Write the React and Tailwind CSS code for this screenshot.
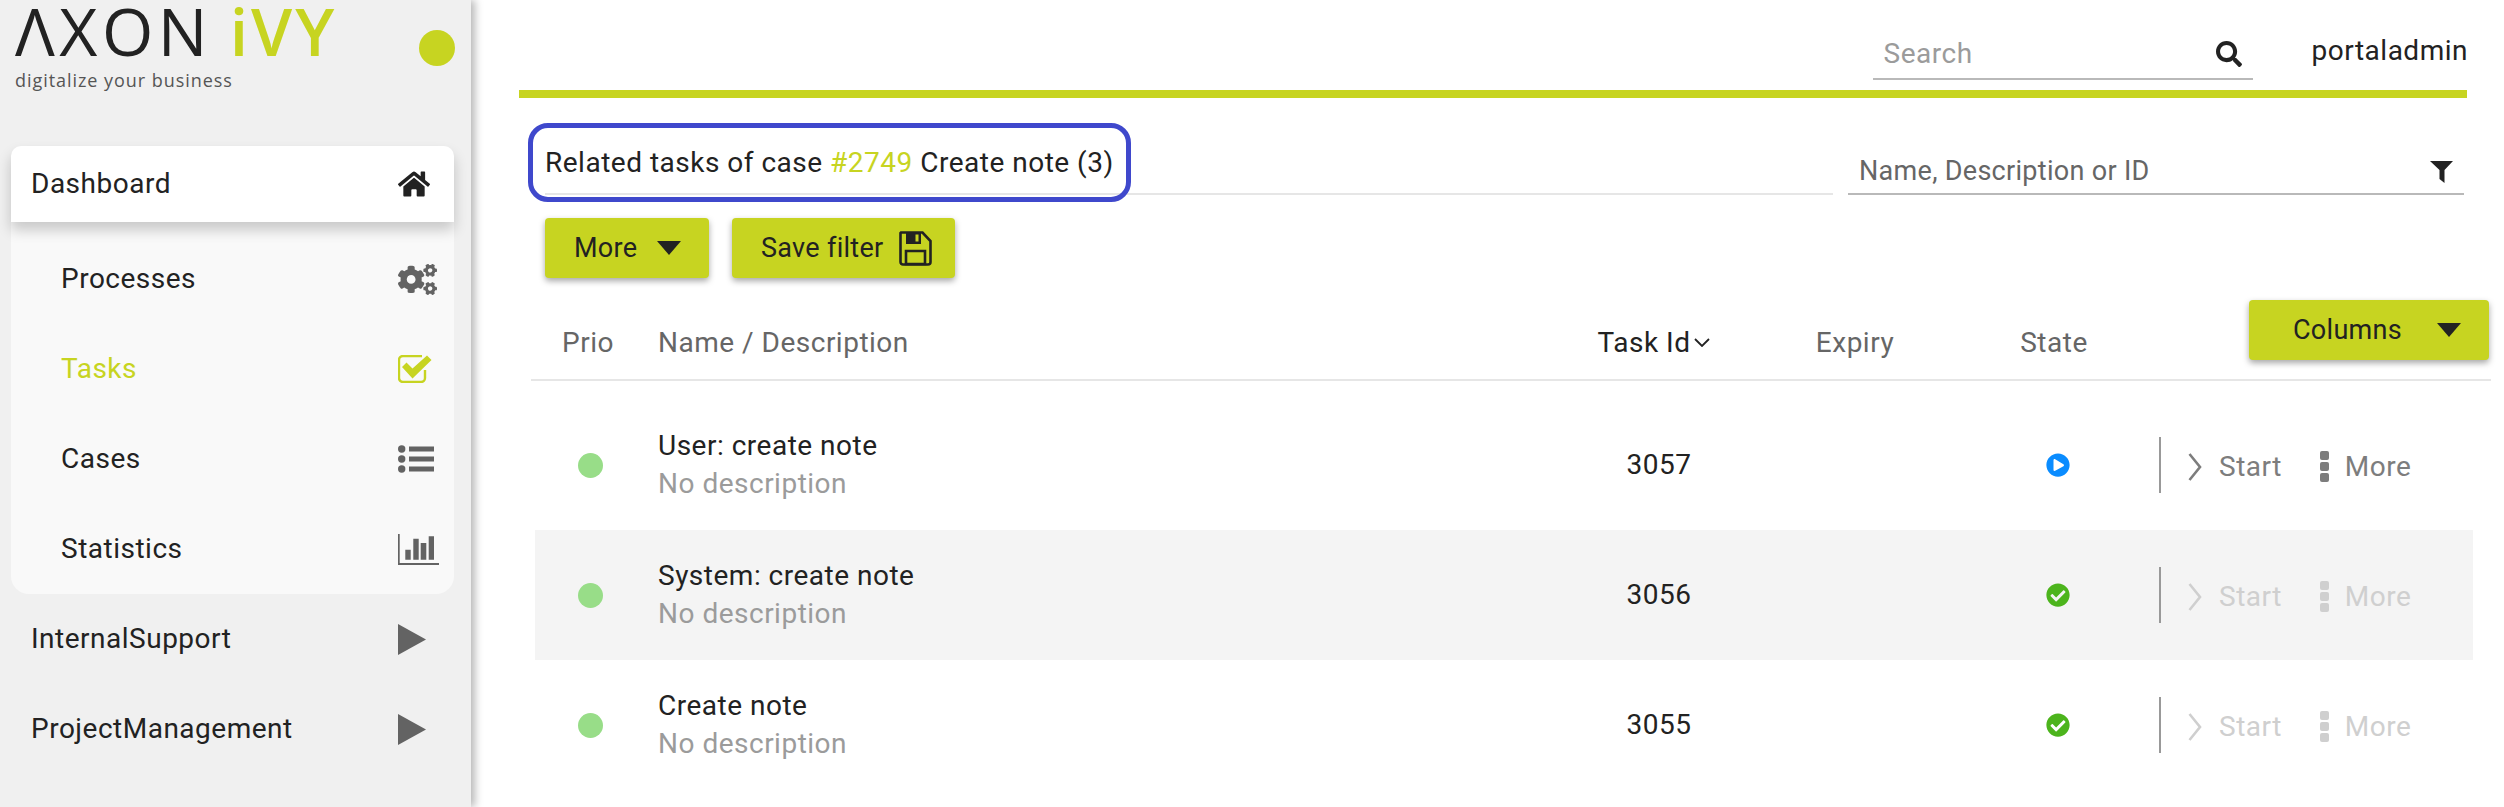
import { FaHome, FaCogs, FaSearch, FaCheckCircle, FaPlayCircle } from 'react-icons/fa';

function Triangle({ className }) {
  return (
    <svg viewBox="0 0 24 14" className={className} fill="currentColor">
      <path d="M0 0h24L12 14z" />
    </svg>
  );
}

function TasksIcon() {
  return (
    <svg viewBox="0 0 34 28" className="w-[34px] h-[28px]">
      <path d="M27 15v8a4 4 0 0 1-4 4H5a4 4 0 0 1-4-4V5a4 4 0 0 1 4-4h19" fill="none" stroke="#c7d421" strokeWidth="2.4" />
      <path d="M4 12l4.5-4.5 6 6L29 .5 33.5 5 14.5 23.5z" fill="#c7d421" />
    </svg>
  );
}

function ListIcon() {
  return (
    <svg viewBox="0 0 36 28" className="w-[36px] h-[28px]" fill="#636363">
      <circle cx="3.7" cy="4" r="3.7" />
      <circle cx="3.7" cy="14" r="3.7" />
      <circle cx="3.7" cy="24" r="3.7" />
      <path d="M11 1.5h25v5H11zM11 11.5h25v5H11zM11 21.5h25v5H11z" />
    </svg>
  );
}

function ChartIcon() {
  return (
    <svg viewBox="0 0 41 31" className="w-[41px] h-[31px]" fill="#636363">
      <path d="M0 0h1.7v29H41v2H0z" />
      <path d="M7.3 15.7h5.4v10H7.3zM15.3 4.7h5.4v21h-5.4zM22.7 9h5.6v16.7h-5.6zM30.7 2.3H36v23.4h-5.3z" />
    </svg>
  );
}

function FilterIcon() {
  return (
    <svg viewBox="0 0 23 22" className="w-[23px] h-[22px] mt-[3px]" fill="#222">
      <path d="M0 0h23l-8.5 9v13l-5-4V9z" />
    </svg>
  );
}

function SaveIcon() {
  return (
    <svg viewBox="0 0 33 35" className="w-[33px] h-[35px] ml-[15px]">
      <path d="M2 1.5h21.5L31.5 10v21a2.5 2.5 0 0 1-2.5 2.5H4A2.5 2.5 0 0 1 1.5 31V2z" fill="none" stroke="#222" strokeWidth="2.6" />
      <path d="M7 1.5h15V13H7z" fill="#222" />
      <path d="M16.5 3.5h3v7h-3z" fill="#c7d421" />
      <path d="M7 20h19v13H7z" fill="none" stroke="#222" strokeWidth="2.6" />
    </svg>
  );
}

function SidebarRow({ label, icon, className }) {
  return (
    <div className={`flex items-center justify-between h-[90px] ${className}`}>
      <span>{label}</span>
      <span className="w-[41px] flex items-center">{icon}</span>
    </div>
  );
}

function Sidebar() {
  const arrow = (
    <svg viewBox="0 0 28 31" className="w-[28px] h-[31px]" fill="#636363">
      <path d="M0 0l28 15.5L0 31z" />
    </svg>
  );
  return (
    <aside className="w-[471px] shrink-0 h-[807px] bg-[#f0f0f0] shadow-[4px_0_8px_rgba(0,0,0,0.28)] text-[28px] text-[#222] tracking-[0.5px] overflow-hidden">
      <div className="h-[146px] flex justify-between pl-[15px] pr-[16px]">
        <div className="font-['Open_Sans',sans-serif]">
          <div className="text-[66px] leading-[60px] tracking-[4.5px] whitespace-nowrap">
            <span className="text-[#222]">ΛXON</span>{' '}
            <span className="text-[#c7d421] font-semibold tracking-[3px] -ml-[4px]">iVY</span>
          </div>
          <div className="text-[18px] leading-[22px] mt-[9px] tracking-[0.95px] text-[#555] whitespace-nowrap">
            digitalize your business
          </div>
        </div>
        <div className="w-[36px] h-[36px] rounded-full bg-[#c7d421] mt-[30px]" />
      </div>
      <div className="mx-[11px] w-[443px]">
        <div className="relative z-10 h-[76px] bg-white rounded-t-[10px] flex items-center justify-between pl-[20px] pr-[15px] shadow-[0_8px_14px_rgba(0,0,0,0.2)]">
          <span>Dashboard</span>
          <span className="w-[41px]"><FaHome className="text-[32px] text-[#222]" /></span>
        </div>
        <div className="bg-[#f9f9f9] rounded-b-[18px] pt-[12px] pl-[50px] pr-[15px]">
          <SidebarRow label="Processes" icon={<FaCogs className="text-[39px] text-[#636363]" />} />
          <SidebarRow label="Tasks" className="text-[#c7d421]" icon={<TasksIcon />} />
          <SidebarRow label="Cases" icon={<ListIcon />} />
          <SidebarRow label="Statistics" icon={<ChartIcon />} />
        </div>
        <div className="pl-[20px] pr-[15px]">
          <SidebarRow label="InternalSupport" icon={arrow} />
          <SidebarRow label="ProjectManagement" icon={arrow} />
        </div>
      </div>
    </aside>
  );
}

function LimeButton({ children, className }) {
  return (
    <div className={`h-[60px] rounded-[4px] bg-[#c7d421] flex items-center text-[27px] tracking-[0.3px] text-[#222] shadow-[0_3px_6px_rgba(0,0,0,0.35)] ${className}`}>
      {children}
    </div>
  );
}

const COLS = 'grid grid-cols-[123px_912px_180px_210px_196px_1fr] items-center';

function TaskRow({ name, id, active, striped }) {
  const actionColor = active ? 'text-[#7d7d7d]' : 'text-[#cfcfcf]';
  return (
    <div className={`${COLS} h-[130px] w-[1938px] ${striped ? 'bg-[#f4f4f4]' : ''}`}>
      <div className="w-[25px] h-[25px] rounded-full bg-[#98dd88] ml-[43px]" />
      <div>
        <div className="text-[#222] leading-[38px]">{name}</div>
        <div className="text-[#9b9b9b] leading-[38px]">No description</div>
      </div>
      <div className="text-center text-[#222] pr-[2px]">{id}</div>
      <div />
      <div className="flex justify-center">
        {active ? (
          <FaPlayCircle className="text-[24px] text-[#0a8cff]" />
        ) : (
          <FaCheckCircle className="text-[24px] text-[#4cb41c]" />
        )}
      </div>
      <div className={`flex items-center ${actionColor}`}>
        <div className="w-[2px] h-[56px] bg-[#999] ml-[3px]" />
        <svg viewBox="0 0 14 28" className="w-[14px] h-[28px] ml-[27px] mt-[3px]" fill="none" stroke="currentColor" strokeWidth="2.6">
          <path d="M1.5 1l10.5 13L1.5 27" />
        </svg>
        <span className="ml-[17px] mt-[3px]">Start</span>
        <div className="ml-[38px] mt-[3px] flex flex-col gap-[2px]">
          <div className="w-[9px] h-[9px] rounded-[2px] bg-current" />
          <div className="w-[9px] h-[9px] rounded-[2px] bg-current" />
          <div className="w-[9px] h-[9px] rounded-[2px] bg-current" />
        </div>
        <span className="ml-[16px] mt-[3px]">More</span>
      </div>
    </div>
  );
}

function Main() {
  return (
    <main className="flex-1 min-w-0 text-[28px] tracking-[0.5px]">
      <div className="h-[90px] flex items-start pt-[32px] pr-[36px] justify-end">
        <div className="w-[380px] h-[48px] border-b-2 border-[#b9b9b9] flex items-center justify-between pl-[11px] pr-[11px]">
          <span className="text-[#9b9b9b] -mt-[2px]">Search</span>
          <FaSearch className="text-[26px] text-[#222] -mt-[2px]" />
        </div>
        <span className="ml-[59px] text-[#222] leading-[38px]">portaladmin</span>
      </div>
      <div className="h-[8px] bg-[#c7d421] ml-[48px] w-[1948px]" />

      <div className="flex ml-[74px] h-[97px] w-[1919px] items-end">
        <div className="relative w-[1288px] h-[67px] border-b-2 border-[#e6e6e6] flex items-center">
          <span className="text-[#222] mt-[5px]">
            Related tasks of case <span className="text-[#c7d421]">#2749</span> Create note (3)
          </span>
          <div className="absolute left-[-17px] top-[-5px] w-[603px] h-[79px] border-[5px] border-[#3f48cc] rounded-[20px]" />
        </div>
        <div className="ml-[15px] w-[616px] h-[48px] border-b-2 border-[#b9b9b9] flex items-center justify-between pl-[11px] pr-[11px]">
          <span className="text-[#666] text-[27px] tracking-[0.3px] mt-[3px]">Name, Description or ID</span>
          <FilterIcon />
        </div>
      </div>

      <div className="flex gap-[23px] ml-[74px] mt-[23px]">
        <LimeButton className="w-[164px] pl-[29px]">
          More
          <Triangle className="w-[24px] h-[14px] ml-[20px] text-[#222]" />
        </LimeButton>
        <LimeButton className="w-[223px] pl-[29px]">
          Save filter
          <SaveIcon />
        </LimeButton>
      </div>

      <div className="mt-[22px] ml-[60px] w-[1960px] border-b-2 border-[#e6e6e6] text-[#666]">
        <div className={`${COLS} h-[79px] pl-[4px]`}>
          <span className="ml-[27px] pt-[5px]">Prio</span>
          <span className="pt-[5px]">Name / Description</span>
          <span className="flex items-center justify-center text-[#222] pt-[5px] pr-[12px]">
            Task Id
            <svg viewBox="0 0 16 9" className="w-[16px] h-[9px] ml-[4px]" fill="none" stroke="currentColor" strokeWidth="1.8">
              <path d="M1 1l7 7 7-7" />
            </svg>
          </span>
          <span className="text-center pt-[5px]">Expiry</span>
          <span className="text-center pr-[8px] pt-[5px]">State</span>
          <div className="flex justify-end pr-[2px] pb-[20px]">
            <LimeButton className="w-[240px] pl-[44px] shrink-0">
              Columns
              <Triangle className="w-[24px] h-[14px] ml-[35px] text-[#222]" />
            </LimeButton>
          </div>
        </div>
      </div>

      <div className="mt-[19px] ml-[64px]">
        <TaskRow name="User: create note" id="3057" active />
        <TaskRow name="System: create note" id="3056" striped />
        <TaskRow name="Create note" id="3055" />
      </div>
    </main>
  );
}

export default function App() {
  return (
    <div className="flex w-[2504px] h-[807px] overflow-hidden bg-white font-['Roboto',sans-serif]">
      <Sidebar />
      <Main />
    </div>
  );
}
